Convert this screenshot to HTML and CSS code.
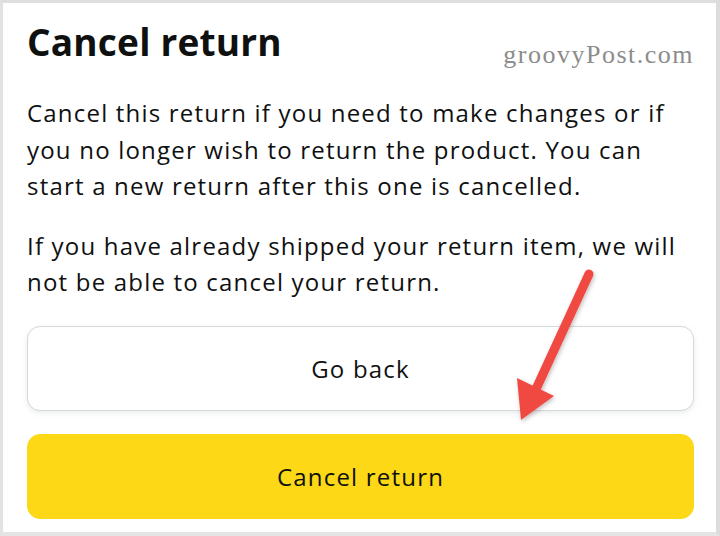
FILE: index.html
```html
<!DOCTYPE html>
<html>
<head>
<meta charset="utf-8">
<link rel="stylesheet" href="styles.css">
</head>
<body>
<div class="frame">
  <div class="sheet">
    <div class="header">
      <h1 class="title">Cancel return</h1>
      <span class="watermark">groovyPost.com</span>
    </div>
    <p class="para">Cancel this return if you need to make changes or if you no longer wish to return the product. You can start a new return after this one is cancelled.</p>
    <p class="para">If you have already shipped your return item, we will not be able to cancel your return.</p>
    <div class="actions">
      <button class="btn btn-secondary">Go back</button>
      <button class="btn btn-primary">Cancel return</button>
    </div>
  </div>
  <svg class="arrow" width="120" height="180" viewBox="0 0 120 180">
    <defs>
      <filter id="sh" x="-30%" y="-30%" width="160%" height="160%">
        <feDropShadow dx="1" dy="2" stdDeviation="2" flood-color="#000" flood-opacity="0.25"/>
      </filter>
    </defs>
    <g filter="url(#sh)">
      <line x1="89" y1="24" x2="31" y2="150" stroke="#ef4a42" stroke-width="9" stroke-linecap="round"/>
      <polygon points="17,128 54,146 21,170" fill="#ef4a42"/>
    </g>
  </svg>
</div>
</body>
</html>
```
FILE: styles.css
```css
html, body {
  margin: 0;
  padding: 0;
  background: #ffffff;
}
.frame {
  position: relative;
  width: 720px;
  height: 536px;
  box-sizing: border-box;
  border-top: 3px solid #dedede;
  border-left: 3px solid #e2e2e2;
  border-right: 4px solid #dcdcdc;
  border-bottom: 4px solid #e4e4e4;
  background: #fff;
  overflow: hidden;
}
.sheet {
  padding: 17px 22px 0 24px;
  font-family: "Open Sans", "Noto Sans", sans-serif;
  color: #0f1111;
}
.header {
  display: flex;
  align-items: flex-start;
  justify-content: space-between;
}
.title {
  margin: 0;
  font-size: 37px;
  font-weight: 700;
  line-height: 44px;
  letter-spacing: 0.2px;
}
.watermark {
  font-family: "Liberation Serif", serif;
  font-size: 26px;
  letter-spacing: 1.5px;
  color: #8c8c8c;
  margin-top: 20px;
  margin-right: 0;
}
.para {
  margin: 0;
  font-size: 24px;
  line-height: 36.5px;
  letter-spacing: 1.2px;
  margin-top: 25px;
}
.para + .para {
  margin-top: 23px;
}
.actions {
  display: flex;
  flex-direction: column;
  gap: 23px;
  margin-top: 25px;
}
.btn {
  display: block;
  width: 100%;
  height: 85px;
  border-radius: 13px;
  font-family: "Open Sans", "Noto Sans", sans-serif;
  font-size: 24px;
  letter-spacing: 1.2px;
  color: #0f1111;
  cursor: pointer;
}
.btn-secondary {
  background: #fff;
  border: 1.5px solid #d5d9d9;
  box-shadow: 0 2px 5px rgba(213, 217, 217, 0.5);
}
.btn-primary {
  background: #fcd816;
  border: 1px solid #fcd816;
}
.arrow {
  position: absolute;
  left: 497px;
  top: 247px;
}
```
